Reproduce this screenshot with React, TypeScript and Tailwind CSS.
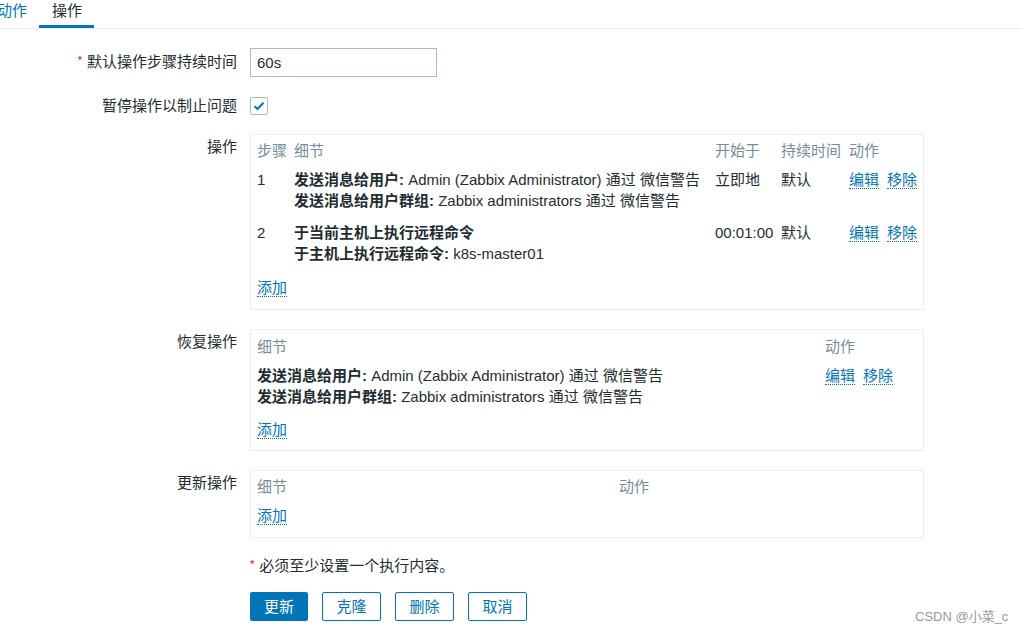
import React from 'react';

const font = { fontFamily: '"Liberation Sans", "Noto Sans CJK SC", sans-serif' };

function Req() {
  return <span className="text-[#d40000] text-[11px] mr-[5px] relative top-[-3px]">*</span>;
}

function A({ children }: { children: React.ReactNode }) {
  return (
    <a className="text-[#0275b8] border-b border-dotted border-[#0275b8] cursor-pointer">{children}</a>
  );
}

function Row({ label, children, top }: { label: React.ReactNode; children: React.ReactNode; top?: boolean }) {
  return (
    <div className={`flex gap-[13px] ${top ? 'items-start' : 'items-center'}`}>
      <div className={`w-[237px] shrink-0 text-right ${top ? 'pt-[2px]' : ''}`}>{label}</div>
      {children}
    </div>
  );
}

const ops = [
  {
    step: '1',
    lines: [
      ['发送消息给用户:', ' Admin (Zabbix Administrator) 通过 微信警告'],
      ['发送消息给用户群组:', ' Zabbix administrators 通过 微信警告'],
    ],
    start: '立即地',
    dur: '默认',
  },
  {
    step: '2',
    lines: [
      ['于当前主机上执行远程命令', ''],
      ['于主机上执行远程命令:', ' k8s-master01'],
    ],
    start: '00:01:00',
    dur: '默认',
  },
];

export default function App() {
  return (
    <div style={font} className="relative w-[1022px] h-[633px] overflow-hidden bg-white text-[15px] leading-[21px] text-[#1f2c33]">
      {/* tabs */}
      <div className="h-[29px] border-b border-[#ebeef0] flex">
        <div className="ml-[-15px] px-[12px] pt-[0px] h-[28px] text-[#0275b8]">动作</div>
        <div className="pl-[13px] pr-[12px] pt-[0px] h-[28px] border-b-[3px] border-[#0275b8]">操作</div>
      </div>

      <div className="flex flex-col mt-[19px]">
        <Row label={<><Req />默认操作步骤持续时间</>}>
          <input
            readOnly
            value="60s"
            style={font}
            className="w-[187px] h-[29px] border border-[#acbbc2] px-[6px] text-[15px] text-[#1f2c33] outline-none"
          />
        </Row>

        <div className="mt-[18px]">
          <Row label="暂停操作以制止问题">
            <span className="w-[18px] h-[18px] border border-[#acbbc2] rounded-[2px] flex items-center justify-center">
              <svg width="12" height="10" viewBox="0 0 12 10">
                <path d="M1.5 5.2 L4.5 8 L10.5 1.8" fill="none" stroke="#0275b8" strokeWidth="2" />
              </svg>
            </span>
          </Row>
        </div>

        {/* operations */}
        <div className="mt-[18px]">
          <Row label="操作" top>
            <div className="w-[674px] h-[176px] border border-[#ebeef0] px-[6px] pt-[5px]">
              <table className="table-fixed border-collapse w-[660px]">
                <colgroup>
                  <col className="w-[37px]" />
                  <col className="w-[421px]" />
                  <col className="w-[66px]" />
                  <col className="w-[68px]" />
                  <col />
                </colgroup>
                <thead>
                  <tr className="text-[#768d99] text-left">
                    <th className="font-normal pb-[3px]">步骤</th>
                    <th className="font-normal pb-[3px]">细节</th>
                    <th className="font-normal pb-[3px]">开始于</th>
                    <th className="font-normal pb-[3px] whitespace-nowrap">持续时间</th>
                    <th className="font-normal pb-[3px]">动作</th>
                  </tr>
                </thead>
                <tbody>
                  {ops.map((o) => (
                    <tr key={o.step} className="align-top">
                      <td className="pt-[5px] pb-[6px]">{o.step}</td>
                      <td className="pt-[5px] pb-[6px] whitespace-nowrap">
                        {o.lines.map((l, i) => (
                          <div key={i}>
                            <b>{l[0]}</b>
                            {l[1]}
                          </div>
                        ))}
                      </td>
                      <td className="pt-[5px] pb-[6px] whitespace-nowrap">{o.start}</td>
                      <td className="pt-[5px] pb-[6px]">{o.dur}</td>
                      <td className="pt-[5px] pb-[6px] whitespace-nowrap">
                        <A>编辑</A>
                        <span className="ml-[8px]"><A>移除</A></span>
                      </td>
                    </tr>
                  ))}
                </tbody>
              </table>
              <div className="pt-[7px]"><A>添加</A></div>
            </div>
          </Row>
        </div>

        {/* recovery */}
        <div className="mt-[19px]">
          <Row label="恢复操作" top>
            <div className="w-[674px] h-[122px] border border-[#ebeef0] px-[6px] pt-[6px]">
              <table className="table-fixed border-collapse w-[660px]">
                <colgroup>
                  <col className="w-[568px]" />
                  <col />
                </colgroup>
                <thead>
                  <tr className="text-[#768d99] text-left">
                    <th className="font-normal pb-[3px]">细节</th>
                    <th className="font-normal pb-[3px]">动作</th>
                  </tr>
                </thead>
                <tbody>
                  <tr className="align-top">
                    <td className="pt-[5px] pb-[6px] whitespace-nowrap">
                      <div><b>发送消息给用户:</b> Admin (Zabbix Administrator) 通过 微信警告</div>
                      <div><b>发送消息给用户群组:</b> Zabbix administrators 通过 微信警告</div>
                    </td>
                    <td className="pt-[5px] pb-[6px] whitespace-nowrap">
                      <A>编辑</A>
                      <span className="ml-[8px]"><A>移除</A></span>
                    </td>
                  </tr>
                </tbody>
              </table>
              <div className="pt-[6px]"><A>添加</A></div>
            </div>
          </Row>
        </div>

        {/* update */}
        <div className="mt-[19px]">
          <Row label="更新操作" top>
            <div className="w-[674px] h-[68px] border border-[#ebeef0] px-[6px] pt-[5px]">
              <table className="table-fixed border-collapse w-[660px]">
                <colgroup>
                  <col className="w-[362px]" />
                  <col />
                </colgroup>
                <thead>
                  <tr className="text-[#768d99] text-left">
                    <th className="font-normal pb-[3px]">细节</th>
                    <th className="font-normal pb-[3px]">动作</th>
                  </tr>
                </thead>
              </table>
              <div className="pt-[5px]"><A>添加</A></div>
            </div>
          </Row>
        </div>

        <div className="ml-[250px] mt-[17px]">
          <Req />必须至少设置一个执行内容。
        </div>

        <div className="ml-[250px] mt-[14px] flex gap-[14px]">
          <button style={font} className="w-[58px] h-[29px] rounded-[2px] bg-[#0275b8] text-white text-[15px]">更新</button>
          <button style={font} className="w-[59px] h-[29px] rounded-[2px] border border-[#0275b8] text-[#0275b8] text-[15px]">克隆</button>
          <button style={font} className="w-[59px] h-[29px] rounded-[2px] border border-[#0275b8] text-[#0275b8] text-[15px]">删除</button>
          <button style={font} className="w-[59px] h-[29px] rounded-[2px] border border-[#0275b8] text-[#0275b8] text-[15px]">取消</button>
        </div>
      </div>

      <div className="absolute left-[915px] top-[608px] text-[13px] leading-[18px] text-[#999999]">CSDN @小菜_c</div>
    </div>
  );
}
